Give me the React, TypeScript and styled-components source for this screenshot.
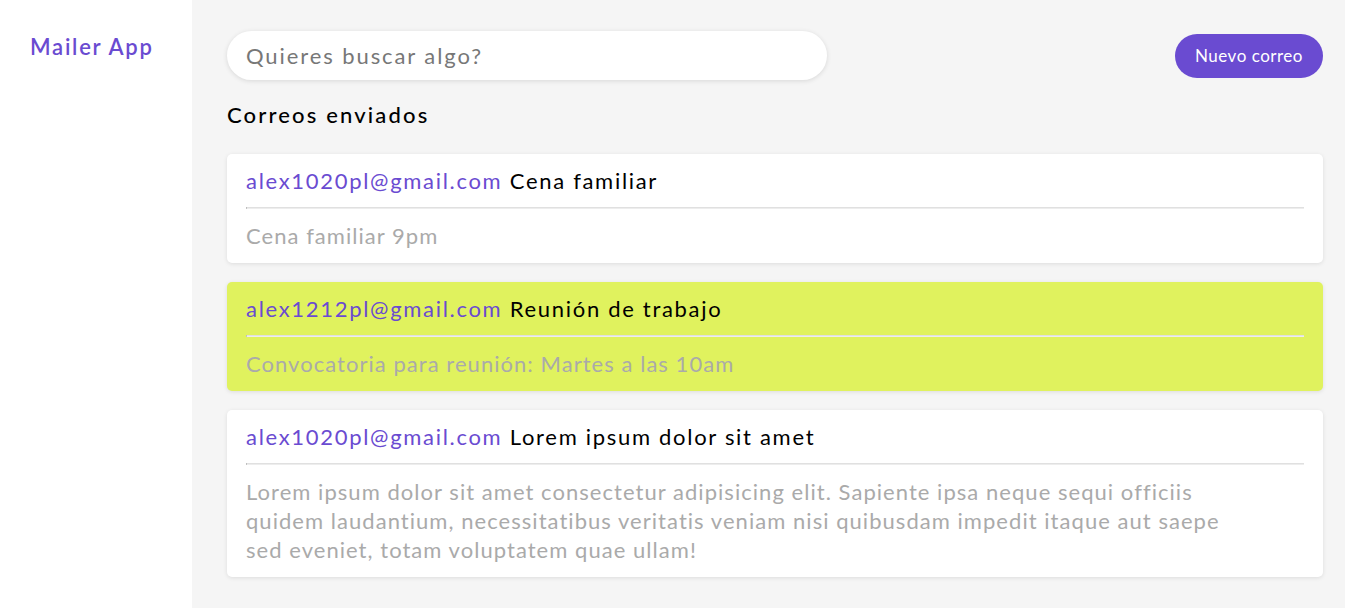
import styled, { createGlobalStyle } from "styled-components"

const GlobalStyle = createGlobalStyle`
  html, body {
    margin: 0;
    padding: 0;
    background: #f5f5f5;
    font-family: "Lato", "Open Sans", sans-serif;
    letter-spacing: 0.065em;
  }
  * {
    box-sizing: border-box;
  }
`

type Mail = {
  id: number
  from: string
  subject: string
  body: string
  highlighted?: boolean
}

const mails: Mail[] = [
  {
    id: 1,
    from: "alex1020pl@gmail.com",
    subject: "Cena familiar",
    body: "Cena familiar 9pm",
  },
  {
    id: 2,
    from: "alex1212pl@gmail.com",
    subject: "Reunión de trabajo",
    body: "Convocatoria para reunión: Martes a las 10am",
    highlighted: true,
  },
  {
    id: 3,
    from: "alex1020pl@gmail.com",
    subject: "Lorem ipsum dolor sit amet",
    body: "Lorem ipsum dolor sit amet consectetur adipisicing elit. Sapiente ipsa neque sequi officiis quidem laudantium, necessitatibus veritatis veniam nisi quibusdam impedit itaque aut saepe sed eveniet, totam voluptatem quae ullam!",
  },
]

const Layout = styled.div`
  display: flex;
  min-height: 608px;
`

const Sidebar = styled.aside`
  width: 192px;
  flex-shrink: 0;
  background: #ffffff;
  padding: 33px 0 0 30px;
`

const Logo = styled.h1`
  margin: 0;
  font-size: 22px;
  font-weight: 600;
  letter-spacing: 0.08em;
  color: #6a4bd1;
`

const Main = styled.main`
  flex: 1;
  padding: 31px 22px 20px 35px;
`

const TopBar = styled.div`
  display: flex;
  align-items: center;
  justify-content: space-between;
`

const Search = styled.input`
  width: 600px;
  height: 49px;
  border: none;
  border-radius: 25px;
  background: #ffffff;
  box-shadow: 0 1px 5px rgba(0, 0, 0, 0.12);
  padding: 0 19px;
  font-family: inherit;
  font-size: 22px;
  letter-spacing: 0.087em;
  color: #333;
  outline: none;

  &::placeholder {
    color: #777777;
  }
`

const NewButton = styled.button`
  width: 148px;
  height: 44px;
  padding: 0;
  border: none;
  border-radius: 22px;
  background: #6a4bd1;
  color: #ffffff;
  font-family: inherit;
  font-size: 17px;
  letter-spacing: 0.03em;
  cursor: pointer;
`

const Title = styled.h2`
  margin: 21px 0 26px;
  font-size: 22px;
  font-weight: 500;
  letter-spacing: 0.098em;
  color: #000;
`

const List = styled.div`
  display: flex;
  flex-direction: column;
  gap: 19px;
`

const Card = styled.div<{ $highlighted?: boolean }>`
  background: ${(p) => (p.$highlighted ? "#e0f25e" : "#ffffff")};
  border-radius: 5px;
  box-shadow: 0 1px 4px rgba(0, 0, 0, 0.1);
  padding: 12px 19px 13px;
`

const Header = styled.div`
  font-size: 22px;
  line-height: 30px;
  letter-spacing: 0.077em;
  color: #000;
`

const From = styled.span`
  color: #6a4bd1;
`

const Divider = styled.hr`
  margin: 11px 0 12px;
  border: none;
  border-left: 1px solid #9a9a9a;
  border-top: 1px solid #e0e0e0;
  border-bottom: 1px solid #ededed;
  height: 0;
`

const Body = styled.p`
  margin: 0;
  padding-right: 54px;
  font-size: 22px;
  line-height: 29px;
  color: #aaaaaa;
`

export default function App() {
  return (
    <>
      <GlobalStyle />
      <Layout>
        <Sidebar>
          <Logo>Mailer App</Logo>
        </Sidebar>
        <Main>
          <TopBar>
            <Search placeholder="Quieres buscar algo?" />
            <NewButton>Nuevo correo</NewButton>
          </TopBar>
          <Title>Correos enviados</Title>
          <List>
            {mails.map((m) => (
              <Card key={m.id} $highlighted={m.highlighted}>
                <Header>
                  <From>{m.from}</From> {m.subject}
                </Header>
                <Divider />
                <Body>{m.body}</Body>
              </Card>
            ))}
          </List>
        </Main>
      </Layout>
    </>
  )
}
